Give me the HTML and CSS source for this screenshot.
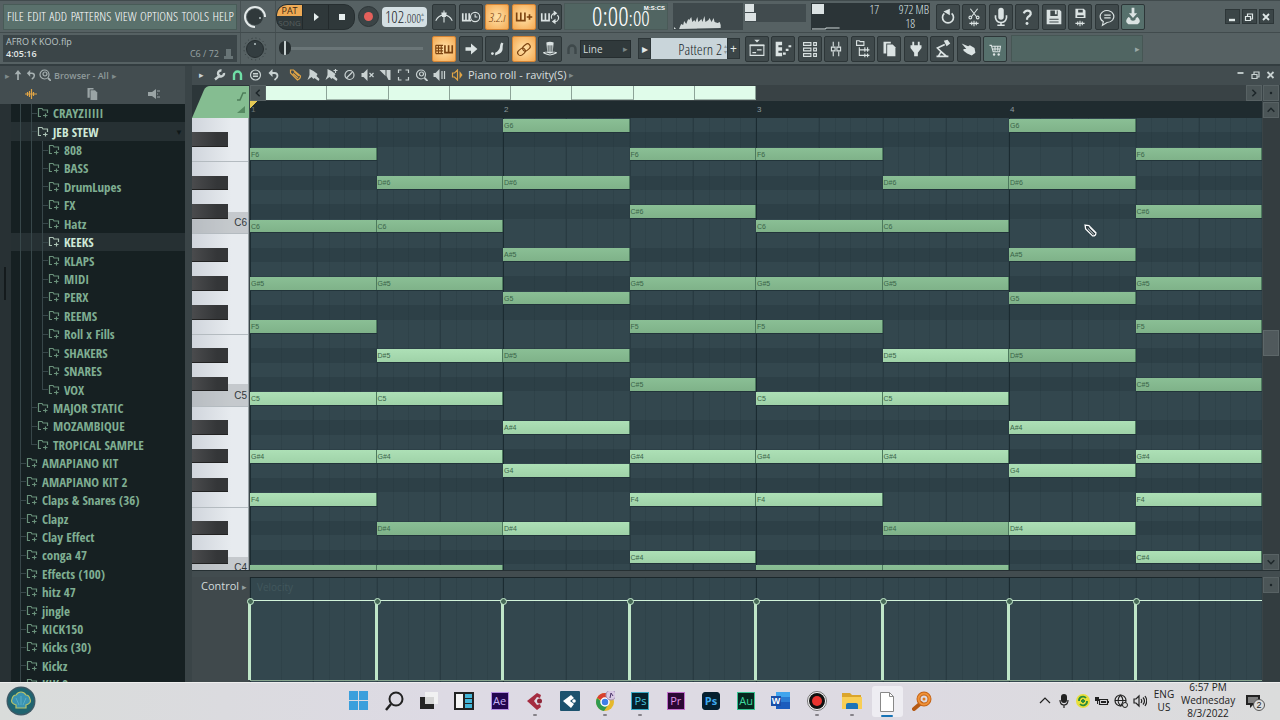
FILE: index.html
```html
<!DOCTYPE html>
<html lang="en">
<head>
<meta charset="utf-8">
<title>Piano roll - ravity(S)</title>
<link rel="stylesheet" href="styles.css">
</head>
<body>
<svg class="defs" aria-hidden="true">
  <symbol id="metro" viewBox="0 0 24 24"><path class="s" d="M3 16q3-6 9-6t9 6M12 5v13"/><path class="f" d="M9 7h6l-1 5h-4z"/></symbol>
  <symbol id="wait" viewBox="0 0 24 24"><path class="s w" d="M3 8v8h9M6.500 8v8M10 8v8"/><circle class="s" cx="16.500" cy="12" r="5"/><path class="s" d="M16.500 9v3h2.500"/></symbol>
  <symbol id="plus" viewBox="0 0 24 24"><path class="s w" d="M4 7v9h9V7M8.500 7v9M15 12h6M18 9v6"/></symbol>
  <symbol id="loop" viewBox="0 0 24 24"><path class="s w" d="M3 8v8h8V8M7 8v8"/><path class="s" d="M14 14a4 4 0 0 1 3-6M20 10a4 4 0 0 1-3 7"/><path class="f" d="M16 5l4 3-4 3zM18 14l-4 3 4 3z"/></symbol>
  <symbol id="typing" viewBox="0 0 24 24"><path class="s" d="M3 8h8M3 11h8M3 14h8M3 17h8M3 8v9M6 8v9M9 8v9"/><path class="s w" d="M13 8v8h8V8M17 8v8"/></symbol>
  <symbol id="arrow" viewBox="0 0 24 24"><path class="f" d="M6 10h6V6l7 6-7 6v-4H6z"/></symbol>
  <symbol id="slide" viewBox="0 0 24 24"><path class="f" d="M12 15c5-4 2-7 5-10l2 1c-2 4 1 8-4 11l-5 2v-3z"/><circle class="f" cx="7" cy="17" r="1.500"/></symbol>
  <symbol id="link" viewBox="0 0 24 24"><g class="s"><rect x="4" y="12" width="9" height="6" rx="3" transform="rotate(-40 9 14)"/><rect x="10" y="7" width="9" height="6" rx="3" transform="rotate(-40 15 10)"/></g></symbol>
  <symbol id="hat" viewBox="0 0 24 24"><path class="f" d="M8 5q4-2 8 0l-1 10h2q4 0 2 2-7 4-14 0-2-2 2-2h2z"/><path class="k" d="M10 8v7M12 8v7M14 8v7M7 16q5 3 10 0"/></symbol>
  <symbol id="playlist" viewBox="0 0 24 24"><path class="f" d="M9 2h6l-3 3z"/><path class="s w" d="M4 8h16"/><path class="s" d="M4.500 8h15v11h-15zM7 16h4M12 13h5"/></symbol>
  <symbol id="piano" viewBox="0 0 24 24"><path class="f" d="M4 4h7v4H7v2h4v4H7v2h4v4H4z"/><path class="s x" d="M12 17h3M15 13h3M18 9h3"/></symbol>
  <symbol id="rack" viewBox="0 0 24 24"><path class="s" d="M5 5h8v3H5zM5 11h8v3H5zM5 17h8v3H5zM16 5h3v3h-3zM16 11h3v3h-3zM16 17h3v3h-3z"/></symbol>
  <symbol id="mixer" viewBox="0 0 24 24"><path class="s" d="M9 4v5M9 15v5M15 4v5M15 15v5M7 10h4v4H7zM13 10h4v4h-4z"/></symbol>
  <symbol id="tree" viewBox="0 0 24 24"><path class="s" d="M5 3h3l1 1h4v4H5zM8 10v9h4M8 13h4M14 10v5M17 10v5M12 13h7M14 17v4M17 17v4M12 19h7"/></symbol>
  <symbol id="pages" viewBox="0 0 24 24"><path class="f" d="M6 4h8v2H9v11H6z"/><path class="f" d="M10 7h6l3 3v10h-9z"/></symbol>
  <symbol id="plug" viewBox="0 0 24 24"><path class="f" d="M8 4h2v4h4V4h2v4h2v3l-4 5v4h-4v-4l-4-5V8h2z"/></symbol>
  <symbol id="lamp" viewBox="0 0 24 24"><path class="f" d="M14 3l4-1 3 4-4 3z"/><path class="s w" d="M15 7L7 11l4 4-3 5M11 15l6 5M6 20h13"/></symbol>
  <symbol id="hand" viewBox="0 0 24 24"><path class="f" d="M4 6l7 3 2-1 5 3 1 5-4 3-5-2-4-3 0-2 3 0z"/></symbol>
  <symbol id="cart" viewBox="0 0 24 24"><path class="s" d="M6 8h2l2 7h7l1-6H9M9 12h9M12 9v5M15 9v5"/><circle class="f" cx="11" cy="18" r="1.300"/><circle class="f" cx="16" cy="18" r="1.300"/></symbol>
  <symbol id="undo" viewBox="0 0 24 24"><path class="s w" d="M8 8a6 6 0 1 0 8 0"/><path class="f" d="M7 6l7-3v7z"/></symbol>
  <symbol id="cut" viewBox="0 0 24 24"><path class="s" d="M8 3l7 9M16 3l-7 9"/><circle class="s" cx="8" cy="12.500" r="1.500"/><circle class="s" cx="16" cy="12.500" r="1.500"/><path class="s" d="M7 19h10M9.500 17v4M12 16v6M14.500 17v4"/></symbol>
  <symbol id="mic" viewBox="0 0 24 24"><rect class="f" x="9" y="2" width="6" height="13" rx="3"/><path class="s w" d="M6 10v3q1 5 6 5t6-5v-3M12 18v3M8 21h8"/></symbol>
  <symbol id="help" viewBox="0 0 24 24"><path class="s x" d="M8.500 8q1-3 4-3 4 0 3.500 4-1 2-3 3-1 1-1 3"/><circle class="f" cx="12" cy="19" r="1.600"/></symbol>
  <symbol id="save" viewBox="0 0 24 24"><path class="f" fill-rule="evenodd" d="M4 4h14l2 2v14H4zM8 5v6h8V5h-1v4h-2V5zM7 14v1h10v-1zM7 17v1h10v-1z"/></symbol>
  <symbol id="savew" viewBox="0 0 24 24"><path class="f" fill-rule="evenodd" d="M7 3h9l2 2v8H7zM10 4v3h5V4zM9 10v2h7v-2z"/><path class="s" d="M7 19h10M9.500 17v4M12 16v6M14.500 17v4"/></symbol>
  <symbol id="chat" viewBox="0 0 24 24"><path class="s" d="M8 17a7.500 6.500 0 1 1 4 1l-5 3zM9 10h7M9 13h7"/></symbol>
  <symbol id="dl" viewBox="0 0 24 24"><path class="f" d="M10.500 2h3v6h3L12 13 7.500 8h3z"/><path class="f" d="M7 12l2 1q0 3 3 3t3-3l2-1q5 5 0 8H7q-5-3 0-8z"/></symbol>
  <symbol id="folder" viewBox="0 0 12 12"><path class="s" d="M4 9.500H1.500v-8H5l1 1.500h4.500V6M6 8.500h4.500M8.500 6.500v4"/></symbol>
  <symbol id="magnet" viewBox="0 0 12 12"><path class="s x" d="M2.500 11V6a3.500 3.500 0 0 1 7 0v5"/></symbol>
  <symbol id="wrench" viewBox="0 0 12 12"><path class="s x" d="M1.500 10.500L7 6M10.500 4A3 3 0 1 1 8 1.500"/></symbol>
  <symbol id="menu" viewBox="0 0 12 12"><circle class="s" cx="6" cy="6" r="5"/><path class="s" d="M3.500 4.500h5M3.500 6h5M3.500 7.500h5"/></symbol>
  <symbol id="back" viewBox="0 0 12 12"><path class="s w" d="M4 4h3q3 0 3 3 0 2-3 4"/><path class="f" d="M5 0v8L1 4z"/></symbol>
  <symbol id="pencil" viewBox="0 0 12 12"><path class="s" d="M1 1l3 0 7 6q0 3-3 4L1 4zM3.500 4.500l5 4.500M4.500 2.500l5 4.500"/></symbol>
  <symbol id="brush" viewBox="0 0 12 12"><path class="f" d="M2 0l4 2 4 3-1 2 3 3-1 2-4-3-1 1-2-2-4 3 2-5 0-2z"/></symbol>
  <symbol id="brush2" viewBox="0 0 12 12"><path class="f" d="M2 0l4 2 4 3-1 2 3 3-1 2-4-3-1 1-2-2-4 3 2-5 0-2zM8 1h4v1H8z"/><path class="s" d="M10 0v4"/></symbol>
  <symbol id="no" viewBox="0 0 12 12"><circle class="s" cx="6" cy="6" r="4.500"/><path class="s" d="M3 9l6-6"/></symbol>
  <symbol id="mute" viewBox="0 0 12 12"><path class="f" d="M0 4h2l4-4v12L2 8H0z"/><path class="s" d="M8 4l4 4M12 4L8 8"/></symbol>
  <symbol id="slice" viewBox="0 0 12 12"><path class="f" d="M0 1h6v6zM7 1h4v10H9L7 7z"/></symbol>
  <symbol id="select" viewBox="0 0 12 12"><path class="s" d="M1 4V1h3M8 1h3v3M11 8v3H8M4 11H1V8"/></symbol>
  <symbol id="zoomi" viewBox="0 0 12 12"><circle class="s" cx="5.500" cy="5.500" r="4.500"/><circle class="s" cx="6" cy="5" r="2"/><path class="s w" d="M9 9l3 3"/></symbol>
  <symbol id="sound" viewBox="0 0 12 12"><path class="f" d="M0 4h2l4-4v12L2 8H0z"/><path class="s" d="M8.500 2v8M11 2v8"/></symbol>
  <symbol id="speaker" viewBox="0 0 12 12"><path class="s" d="M1 4h2l3-3v10L3 8H1z"/><path class="f" d="M8 2l3 4-3 4z"/></symbol>
  <symbol id="wave" viewBox="0 0 12 12"><path class="s" d="M0 6h12M2.500 4v4M4.500 3v6M6.500 1v10M8.500 4v4"/></symbol>
  <symbol id="horn" viewBox="0 0 12 12"><path class="f" d="M0 4h4l4-3v10L4 8H0z"/><path class="s" d="M9 3h3M9 9h3M9 6h1"/></symbol>
  <symbol id="up" viewBox="0 0 12 12"><path class="f" d="M6 0l4 5H7v7H5V5H2z"/></symbol>
  <symbol id="chev" viewBox="0 0 12 12"><path class="s w" d="M2 8l4-4 4 4"/></symbol>
  <symbol id="dot" viewBox="0 0 12 12"><circle class="f" cx="6" cy="6" r="1.500"/></symbol>
</svg>

<header class="top">
  <div class="bar">
    <nav class="menus"><button>FILE</button><button>EDIT</button><button>ADD</button><button>PATTERNS</button><button>VIEW</button><button>OPTIONS</button><button>TOOLS</button><button>HELP</button></nav>
    <div class="knob-cell"><svg class="knob" viewBox="0 0 24 24"><circle cx="12" cy="12" r="8" fill="#30393b"/><path d="M12 22a10 10 0 1 1 10-10" fill="none" stroke="#e3e9e9" stroke-width="2"/><circle cx="17" cy="13" r="1" fill="#b9c5c6"/></svg></div>
    <div class="transport">
      <div class="pill">
        <div class="mode"><button class="pat">PAT</button><button class="song">SONG</button></div>
        <button aria-label="Play"><svg class="i12" viewBox="0 0 12 12"><path d="M4 2l5 4-5 4z" fill="#e6eeee"/></svg></button>
        <button aria-label="Stop"><svg class="i12" viewBox="0 0 12 12"><path d="M3 3h6v6H3z" fill="#e6eeee"/></svg></button>
      </div>
      <button class="rec" aria-label="Record"><span></span></button>
      <div class="tempo"><span>102</span><small>.000</small><i>▴<br>▾</i></div>
    </div>
    <div class="tools five">
      <button class="tool" aria-label="Metronome"><svg><use href="#metro"/></svg></button>
      <button class="tool" aria-label="Wait for input"><svg><use href="#wait"/></svg></button>
      <button class="tool on digits">3.2.ı</button>
      <button class="tool on" aria-label="Overdub"><svg><use href="#plus"/></svg></button>
      <button class="tool" aria-label="Loop record"><svg><use href="#loop"/></svg></button>
    </div>
    <div class="clock"><span>0:00</span><small>:00</small><sup>M:S:CS</sup></div>
    <div class="scope"><svg viewBox="0 0 69 27" preserveAspectRatio="none"><path d="M1 26v-2l2 2h3l2-5 2 1 1-4 2 3 2-5 1 1 2-3 1 5 2-2 1 2 2-5 1 5 3-3 1 3 2-6 1 6 3-2 1-2 2 4 2-4 1 4 3 1 2-1 1 3v3z" fill="#d3dada"/></svg></div>
    <div class="meter"><span class="m1"></span><span class="m2"></span></div>
    <div class="cpu"><span class="box"></span><b class="c17">17</b><b>972 MB</b><b class="c18">18</b><svg class="line" viewBox="0 0 68 5"><path d="M0 4h14V3h14" fill="none" stroke="#cfd8d8"/></svg></div>
    <div class="tools eight">
      <button class="tool" aria-label="Undo"><svg><use href="#undo"/></svg></button>
      <button class="tool" aria-label="Cut"><svg><use href="#cut"/></svg></button>
      <button class="tool" aria-label="Record audio"><svg><use href="#mic"/></svg></button>
      <button class="tool" aria-label="Help"><svg><use href="#help"/></svg></button>
      <button class="tool" aria-label="Save"><svg><use href="#save"/></svg></button>
      <button class="tool" aria-label="Render"><svg><use href="#savew"/></svg></button>
      <button class="tool" aria-label="Chat"><svg><use href="#chat"/></svg></button>
      <button class="tool teal" aria-label="Download"><svg><use href="#dl"/></svg></button>
    </div>
    <div class="win">
      <button aria-label="Minimize"><svg viewBox="0 0 12 12"><path class="s x" d="M3 9h6"/></svg></button>
      <button aria-label="Restore"><svg viewBox="0 0 12 12"><path class="s" d="M2.500 5.500h5v4h-5zM4.500 5V3h5v5H8"/></svg></button>
      <button aria-label="Close"><svg viewBox="0 0 12 12"><path class="s w" d="M3 3l6 6M9 3L3 9"/></svg></button>
    </div>
  </div>
  <div class="bar">
    <div class="hint"><span>AFRO K KOO.flp</span><div><b>4:05:16</b><span class="dim">C6 / 72 <svg class="i12" viewBox="0 0 12 12"><path d="M4 1h5v7h2v3H2V8h2z" fill="#687476"/></svg></span></div></div>
    <div class="knob-cell"><svg class="knob" viewBox="0 0 24 24"><circle cx="12" cy="12" r="11" fill="none" stroke="#333c3e" stroke-dasharray="1 3"/><circle cx="12" cy="12" r="8.500" fill="#333d40" stroke="#252d2f"/><circle cx="12" cy="7" r="1" fill="#bac6c6"/></svg></div>
    <div class="transport"><input class="pitch" type="range" min="0" max="100" value="0" aria-label="Song position"></div>
    <div class="tools five">
      <button class="tool on" aria-label="Typing keyboard"><svg><use href="#typing"/></svg></button>
      <button class="tool" aria-label="Step"><svg><use href="#arrow"/></svg></button>
      <button class="tool" aria-label="Slide"><svg><use href="#slide"/></svg></button>
      <button class="tool on" aria-label="Link"><svg><use href="#link"/></svg></button>
      <button class="tool" aria-label="Hat"><svg><use href="#hat"/></svg></button>
    </div>
    <svg class="i12 snap"><use href="#magnet"/></svg>
    <div class="line-wrap"><select class="line-select" aria-label="Snap"><option>Line</option></select><span>▸</span></div>
    <div class="pattern"><button aria-label="Pattern menu">▸</button><span>Pattern 2<i>▴<br>▾</i></span><button aria-label="Add pattern">+</button></div>
    <div class="tools ten">
      <button class="tool" aria-label="Playlist"><svg><use href="#playlist"/></svg></button>
      <button class="tool" aria-label="Piano roll"><svg><use href="#piano"/></svg></button>
      <button class="tool" aria-label="Channel rack"><svg><use href="#rack"/></svg></button>
      <button class="tool" aria-label="Mixer"><svg><use href="#mixer"/></svg></button>
      <button class="tool" aria-label="Browser"><svg><use href="#tree"/></svg></button>
      <button class="tool" aria-label="Project"><svg><use href="#pages"/></svg></button>
      <button class="tool" aria-label="Plugins"><svg><use href="#plug"/></svg></button>
      <button class="tool" aria-label="Tempo tapper"><svg><use href="#lamp"/></svg></button>
      <button class="tool" aria-label="Touch"><svg><use href="#hand"/></svg></button>
      <button class="tool teal" aria-label="Shop"><svg><use href="#cart"/></svg></button>
    </div>
    <div class="news">▸</div>
  </div>
</header>

<main class="work">
  <aside class="browser">
    <div class="b-head">
      <div class="b-title"><span>▸</span><svg class="i10"><use href="#up"/></svg><svg class="i10"><use href="#back"/></svg><svg class="i12"><use href="#zoomi"/></svg><b>Browser - All</b><span>▸</span></div>
      <div class="b-tabs"><svg class="i12 gold"><use href="#wave"/></svg><svg class="i16"><use href="#pages"/></svg><svg class="i12"><use href="#horn"/></svg></div>
    </div>
    <div class="b-body">
      <div class="b-strip"><span></span></div>
      <div class="b-list"><ul class="files" id="files"></ul></div>
    </div>
  </aside>
  <section class="roll">
    <div class="r-tools">
      <span class="tri">▸</span>
      <svg class="i12"><use href="#wrench"/></svg>
      <svg class="i12 mint"><use href="#magnet"/></svg>
      <svg class="i12"><use href="#menu"/></svg>
      <svg class="i12"><use href="#back"/></svg>
      <svg class="i12 gold draw"><use href="#pencil"/></svg>
      <svg class="i12"><use href="#brush"/></svg>
      <svg class="i12"><use href="#brush2"/></svg>
      <svg class="i12"><use href="#no"/></svg>
      <svg class="i12"><use href="#mute"/></svg>
      <svg class="i12"><use href="#slice"/></svg>
      <svg class="i12"><use href="#select"/></svg>
      <svg class="i12"><use href="#zoomi"/></svg>
      <svg class="i12"><use href="#sound"/></svg>
      <svg class="i12 gold title-icon"><use href="#speaker"/></svg>
      <h1>Piano roll - ravity(S)</h1><span class="tri dim">▸</span>
      <div class="r-win"><svg class="i12" viewBox="0 0 12 12"><path class="s w" d="M3 4h6"/></svg><svg class="i12" viewBox="0 0 12 12"><path class="s" d="M2.500 5.500h5v4h-5zM4.500 5V3h5v5H8"/></svg><svg class="i12" viewBox="0 0 12 12"><path class="s w" d="M3 3l6 6M9 3L3 9"/></svg></div>
    </div>
    <div class="r-grid">
      <div class="corner"><svg viewBox="0 0 57 32" preserveAspectRatio="none"><path d="M0 32L12 4q2-4 6-4h39v32z" fill="#85bd91"/><path d="M45 14h3l3-7h3" fill="none" stroke="#4d7d59" stroke-width="1.500"/><path d="M45 27l8-7v7z" fill="#568a62"/></svg></div>
      <div class="head">
        <div class="mini"><button aria-label="Scroll left"><svg class="left"><use href="#chev"/></svg></button><div class="track"><div class="clip"><i></i><i></i><i></i><i></i><i></i><i></i><i></i><i></i></div></div><button aria-label="Scroll right"><svg class="right"><use href="#chev"/></svg></button></div>
        <div class="ruler"><span class="one">1</span><span>2</span><span>3</span><span>4</span></div>
      </div>
      <div class="side"><button aria-label="Options"><svg><use href="#dot"/></svg></button><button aria-label="Scroll up"><svg><use href="#chev"/></svg></button></div>
      <div class="keys" id="keys"></div>
      <div class="lanes" id="lanes"><div class="cols" id="cols"></div>
        <svg class="cursor" viewBox="0 0 12 12"><path d="M1 1l3.500.5L11 8q0 3-3 3L1.500 4.500z" fill="#24343a" stroke="#fff" stroke-width="1.200"/><path d="M3.500 4L9 9.500M5 3l5 5" stroke="#fff" stroke-width=".8"/></svg>
      </div>
      <div class="scroll"><span class="thumb"></span><button aria-label="Scroll down"><svg class="down"><use href="#chev"/></svg></button></div>
      <div class="split"></div>
      <div class="control">Control <span>▸</span></div>
      <div class="velocity"><div class="cols" id="vcols"></div><span class="vname">Velocity</span><div class="vel" id="vel"></div></div>
      <div class="side low"><button aria-label="Control options"><svg><use href="#dot"/></svg></button></div>
    </div>
  </section>
</main>

<footer class="task">
  <svg class="shell" viewBox="0 0 30 30"><circle cx="15" cy="15" r="14.500" fill="#3d5a66"/><circle cx="15" cy="15" r="13" fill="#1f6470"/><path d="M10 22v-3q-6-2-4-6 1-4 4-4 2-3 5-3t5 3q3 0 4 4 2 4-4 6v3z" fill="#3a93b2" stroke="#b9c468" stroke-width="1.200"/><path d="M15 19V10M13 19l-3-7M17 19l3-7" stroke="#5aaec6"/></svg>
  <div class="apps">
    <span><svg viewBox="0 0 20 20"><path d="M0 0h9v9H0zM10 0h9v9h-9zM0 10h9v9H0zM10 10h9v9h-9z" fill="#3b9fdc"/></svg></span>
    <span><svg viewBox="0 0 20 20"><circle cx="12" cy="8" r="6.500" fill="none" stroke="#222" stroke-width="2"/><path d="M7 13l-5 6" stroke="#222" stroke-width="2.500"/></svg></span>
    <span><svg viewBox="0 0 20 20"><path d="M1 6h14v12H1z" fill="#252525"/><path d="M6 1h13v12H6z" fill="#f4f4f5" opacity=".85"/></svg></span>
    <span><svg viewBox="0 0 20 20"><path d="M0 1h20v18H0z" fill="#222"/><path d="M2 3h7v14H2z" fill="#f5f5f5"/><path d="M11 3h7v4h-7zM11 8h7v4h-7zM11 13h7v4h-7z" fill="#43b5d8"/></svg></span>
    <span><b class="ad ae">Ae</b></span>
    <span class="run"><svg viewBox="0 0 20 20"><path fill-rule="evenodd" d="M2 10l10-8 4 2-1 3-3-1-3 4 3 4 3-1 1 3-4 3z" fill="#a52c40"/><circle cx="14.500" cy="10" r="2.500" fill="#8f2638"/></svg></span>
    <span><svg viewBox="0 0 20 20"><rect width="20" height="20" rx="1" fill="#1d526e"/><path d="M3 10l8-6 3 3-4 3 4 3-3 4z" fill="#fff"/><circle cx="14" cy="10" r="1.800" fill="#fff"/></svg></span>
    <span class="run"><svg viewBox="0 0 20 20"><circle cx="10" cy="11" r="9" fill="#e5b82c"/><path d="M2 7a9 9 0 0 1 16 0l-8 4z" fill="#d8402f"/><path d="M2 7a9 9 0 0 0 7 13l4-6-5-2z" fill="#2f9a50"/><circle cx="10" cy="11" r="4" fill="#3f7fe8" stroke="#fff" stroke-width="1.500"/><circle cx="16" cy="4" r="5" fill="#d9c9e4" stroke="#a493b8"/><path d="M15 7l1-5 2 3" stroke="#4a3568" fill="none"/></svg></span>
    <span class="run"><b class="ad ps">Ps</b></span>
    <span><b class="ad pr">Pr</b></span>
    <span><b class="ad ps2">Ps</b></span>
    <span><b class="ad au">Au</b></span>
    <span><svg viewBox="0 0 20 20"><path d="M5 1h14v5H5z" fill="#41a5ee"/><path d="M5 6h14v5H5z" fill="#2b7cd3"/><path d="M5 11h14v7H5z" fill="#1b5cbd"/><path d="M0 5h10v10H0z" fill="#1a4fa8"/><text x="5" y="13" class="wd">W</text></svg></span>
    <span class="run"><svg viewBox="0 0 20 20"><circle cx="10" cy="10" r="9.500" fill="#f7f7f7" stroke="#555" stroke-width=".8"/><circle cx="10" cy="10" r="8" fill="#111"/><circle cx="10" cy="10" r="5" fill="#e9332f"/></svg></span>
    <span class="run"><svg viewBox="0 0 20 20"><path d="M0 2h8l2 2h9v4H0z" fill="#dba52c"/><path d="M0 6h20v12H0z" fill="#f8ce55"/><path d="M4 18v-4q0-2 2-2h8q2 0 2 2v4z" fill="#1c74b8"/></svg></span>
    <span class="run active"><svg viewBox="0 0 20 20"><path d="M3.500.5h9l4 4v15h-13z" fill="#fff" stroke="#888"/><path d="M12.500.5v4h4" fill="none" stroke="#888"/></svg></span>
    <span><svg viewBox="0 0 20 20"><path d="M9 12l-7 6" stroke="#b65a14" stroke-width="4" stroke-linecap="round"/><circle cx="12" cy="8" r="5.500" fill="none" stroke="#c56418" stroke-width="4"/><circle cx="12" cy="8" r="5.500" fill="none" stroke="#f09238" stroke-width="2"/><circle cx="12" cy="8" r="1.500" fill="#e07a20"/></svg></span>
  </div>
  <div class="tray">
    <svg viewBox="0 0 14 14"><path class="s" d="M2 9l5-5 5 5"/></svg>
    <svg viewBox="0 0 14 14"><rect class="f" x="4" y="0" width="6" height="9" rx="3"/><path class="s" d="M3 6q0 5 4 5t4-5M7 11v3"/></svg>
    <svg viewBox="0 0 14 14"><circle cx="7" cy="7" r="7" fill="#e9df3a"/><path d="M3 7a4 4 0 0 1 7-3M11 7a4 4 0 0 1-7 3M7 5v4M5 7h4" fill="none" stroke="#2c8c3a" stroke-width="1.800"/></svg>
    <svg viewBox="0 0 14 14"><path class="s" d="M4.500 5.500h8v5h-8z"/><path class="f" d="M6 7h5v2H6zM0 3h4v4H0zM2 7h1v3H2zM13 7h1v2h-1z"/></svg>
    <svg viewBox="0 0 14 14"><circle class="s" cx="6.500" cy="6.500" r="5.500"/><path class="s" d="M1 6.500h11M6.500 1q-5 5.500 0 11M6.500 1q5 5.500 0 11"/><circle cx="11" cy="11" r="2.500" fill="#ddd" stroke="#222"/></svg>
    <svg viewBox="0 0 14 14"><path class="s" d="M1 5h2l3-3v10L3 9H1zM8 5q1.500 2 0 4M10 3.500q3 3.500 0 7M12 2q3.500 5 0 10"/></svg>
    <div class="lang">ENG<br>US</div>
    <time>6:57 PM<br>Wednesday<br>8/3/2022</time>
    <div class="note-c"><svg viewBox="0 0 14 14"><path class="f" d="M0 1h14v10H7l-3 3v-3H0z"/><path d="M2 4h10M2 6h10M2 8h7" stroke="#ddd"/></svg><em>2</em></div>
  </div>
</footer>
<script src="script.js"></script>
</body>
</html>
```
FILE: styles.css
```css
:root { --narrow: "Open Sans Condensed Light", "OpenSans Condensed Light", "Roboto Condensed", "Open Sans Condensed", "Open Sans", sans-serif; }
* { box-sizing: border-box; }
body {
  margin: 0; height: 100vh; display: flex; flex-direction: column; overflow: hidden;
  background: #3c4649; color: #dfe7e7; font-size: 12px;
  font-family: "Open Sans", "Noto Sans", sans-serif;
}
button { margin: 0; padding: 0; border: 0; background: none; color: inherit; font: inherit; }
.defs { position: absolute; width: 0; height: 0; }
svg { display: block; color: inherit; flex: none; }
.s { fill: none; stroke: currentColor; stroke-width: 1.2; }
.w { stroke-width: 1.8; }
.x { stroke-width: 2.4; }
.f { fill: currentColor; }
.k { fill: none; stroke: #3f494b; }
.i10 { width: 10px; height: 10px; }
.i12 { width: 12px; height: 12px; }
.i16 { width: 18px; height: 18px; }
.gold { color: #e0a445; }
.mint { color: #6fe0a6; }

/* Main toolbar */
.top { background: #566163; border-bottom: 2px solid #333d40; }
.bar { display: flex; align-items: center; height: 32px; padding-left: 3px; border-top: 1px solid #414b4d; }
.menus {
  width: 234px; height: 26px; display: flex; align-items: center; justify-content: space-between; padding: 0 2px 2px 3px;
  background: #5a716c; border: 1px solid #485b57; color: #fff; font: 13px var(--narrow);
}
.knob-cell { width: 36px; height: 31px; margin-left: 3px; display: flex; align-items: center; justify-content: center; border: solid #465052; border-width: 0 1px; padding-right: 6px; }
.knob { width: 24px; height: 24px; }
.transport { width: 156px; height: 28px; display: flex; align-items: center; gap: 3px; }
.pill { width: 79px; height: 26px; display: flex; background: #2f383a; border: 1px solid #262e30; border-radius: 11px; overflow: hidden; }
.pill > * { flex: 1; display: grid; place-items: center; border-right: 1px solid #232a2c; }
.pill > :last-child { border: 0; }
.mode { font: 9px/11px "Open Sans", sans-serif; }
.mode button { width: 100%; }
.pat { background: #eeaa55; color: #3c2711; border-radius: 8px 0 0 0; }
.song { color: #59605f; font-size: 8px; }
.rec { width: 21px; height: 21px; border-radius: 50%; background: #3b4446; border: 1px solid #2c3537; display: grid; place-items: center; }
.rec span { width: 9px; height: 9px; border-radius: 50%; background: #e4605b; }
.tempo { width: 45px; height: 20px; display: flex; align-items: baseline; justify-content: center; background: #d5e0e4; color: #1c282c; border-radius: 4px; font: 16px/20px var(--narrow); }
.tempo small { font-size: 12px; }
.tempo i, .pattern i { font: 6px/6px "DejaVu Sans", sans-serif; color: #8e9a9e; }
.tempo i { align-self: center; }
.tools { display: flex; justify-content: space-between; }
.five { width: 130px; }
.eight { width: 209px; margin-left: 6px; }
.ten { width: 262px; margin-left: 5px; }
.tool { width: 24px; height: 26px; display: grid; place-items: center; background: #3f494b; border: 1px solid #2d3638; border-radius: 2px; color: #dbe3e3; }
.tool svg { width: 22px; height: 22px; }
.tool.on { background: radial-gradient(#ffe3ab, #f5a951); color: #7c4310; border-color: #d48434; }
.tool.teal { background: #56706c; }
.tool.digits { font: italic 13px var(--narrow); }
.clock { width: 104px; height: 27px; margin-left: 2px; display: flex; align-items: baseline; padding-left: 27px; background: #516562; border: 1px solid #4a5a58; color: #fff; font: 26px/25px var(--narrow); position: relative; }
.clock small { font-size: 21px; }
.clock sup { position: absolute; right: 2px; top: 1px; font: bold 6px/7px "Liberation Sans", sans-serif; }
.scope { width: 70px; height: 27px; margin-left: 5px; background: #3f494c; }
.scope svg { width: 100%; height: 100%; }
.meter { width: 61px; height: 18px; margin-left: 2px; align-self: flex-start; margin-top: 3px; background: #414b4e; display: flex; flex-direction: column; gap: 1px; }
.meter span { height: 8px; width: 9px; background: #dbe2e3; }
.meter .m2 { width: 11px; }
.cpu { width: 119px; height: 27px; margin-left: 5px; background: #2b3437; display: grid; grid-template-columns: 12px 55px 1fr; font: 12px/13px var(--narrow); padding: 0 1px; text-align: right; }
.cpu b { font-weight: normal; }
.cpu .box { background: #dbe2e3; height: 10px; margin-top: 1px; }
.cpu .c18 { grid-column: 3; grid-row: 2; padding-right: 14px; }
.cpu .line { grid-column: 1 / 3; grid-row: 2; width: 67px; height: 5px; align-self: end; }
.win { margin-left: auto; display: flex; gap: 2px; padding-right: 6px; }
.win button { width: 15px; height: 15px; background: #3b4547; border: 1px solid #2d3638; }
.win svg { width: 12px; height: 12px; }
.hint { width: 234px; height: 27px; padding: 1px 3px 0; background: #3b4548; color: #bcc5c6; font-size: 9px; line-height: 12px; }
.hint div { display: flex; justify-content: space-between; }
.hint b { color: #e3e9e9; font-weight: 600; }
.hint .dim { display: flex; gap: 3px; color: #98a3a4; }
.pitch { width: 144px; height: 16px; margin: 0 0 0 3px; appearance: none; background: none; }
.pitch::-webkit-slider-runnable-track { height: 3px; background: #6b7678; }
.pitch::-webkit-slider-thumb { appearance: none; width: 12px; height: 14px; margin-top: -6px; border-radius: 6px; background: linear-gradient(90deg, #272f31 40%, #c7d0d0 40% 55%, #272f31 55%); }
.snap { color: #3e484a; margin-left: 4px; }
.line-wrap { margin-left: 2px; position: relative; }
.line-wrap span { position: absolute; right: 3px; top: 3px; font-size: 9px; line-height: 12px; color: #7b8687; pointer-events: none; }
.line-select { display: block; width: 51px; height: 18px; padding: 0 2px; appearance: none; background: #30393b; color: #d5dcdc; border: 1px solid #252d2f; font: 10px "Open Sans", sans-serif; }
.pattern { display: flex; height: 21px; margin-left: 7px; }
.pattern button { width: 13px; background: #3b4547; border: 1px solid #2d3638; color: #e3eaea; line-height: 18px; }
.pattern > span { width: 76px; display: flex; align-items: center; justify-content: flex-end; gap: 2px; background: #c9d5da; color: #1b272b; font: 15px var(--narrow); }
.news { width: 132px; height: 27px; margin-left: 4px; padding-right: 2px; background: #506562; border: 1px solid #465654; color: #9aa8a6; text-align: right; line-height: 25px; font-size: 9px; }

/* Work area */
.work { flex: 1; min-height: 0; display: flex; gap: 7px; background: #3a4447; }
.browser { width: 185px; display: flex; flex-direction: column; }
.b-head { height: 38px; background: #434d50; color: #a6b0b1; }
.b-title { display: flex; align-items: center; gap: 3px; height: 18px; padding-left: 5px; font-size: 9px; }
.b-title span { color: #7f8a8b; }
.b-title b { font-weight: 600; color: #8f9a9b; }
.b-tabs { display: grid; grid-template-columns: 1fr 1fr 1fr; justify-items: center; align-items: center; height: 19px; color: #9aa4a5; }
.b-body { flex: 1; min-height: 0; display: flex; }
.b-strip { width: 11px; background: #283134; display: flex; align-items: flex-start; }
.b-strip span { width: 2px; height: 33px; margin: 163px 0 0 4px; background: #141a1c; }
.b-list { flex: 1; overflow: hidden; background: #162022; }
.files { list-style: none; margin: 0; padding: 0; height: 102%; display: grid; grid-auto-rows: 1fr; color: #7fae92; font: 13px/18px "Open Sans Condensed", "Open Sans", sans-serif; }
.files li { display: flex; align-items: center; padding-left: 9px; min-height: 0; position: relative; }
.files li.sel { background: #263033; color: #cfe9d8; }
.files svg { width: 12px; height: 12px; margin: 0 4px 0 -1px; opacity: .8; }
.g { width: 11px; height: 100%; border-left: 1px solid #38474a; }
.g.tick { width: 7px; background: linear-gradient(#38474a, #38474a) 0 50% / 5px 1px no-repeat; }
.g.end { border-image: linear-gradient(#38474a 50%, transparent 50%) 1; }
.more { margin-left: auto; padding-right: 2px; font-size: 8px; color: #101819; }

/* Piano roll */
.roll { flex: 1; min-width: 0; display: flex; flex-direction: column; }
.r-tools { height: 19px; display: flex; align-items: center; gap: 6px; padding: 0 0 2px 7px; color: #c9d2d2; background: #424c4f; }
.tri { font-size: 9px; width: 8px; }
.tri.dim { color: #7f8a8b; }
.r-tools .i12 { width: 13px; height: 12px; margin-right: -1px; }
.r-tools .draw { margin-left: 4px; }
.r-tools .title-icon { margin-left: -7px; }
.r-tools .draw + svg, .r-tools .draw { flex: none; }
.r-tools .title-icon { margin-left: 0; }
.r-tools h1 { margin: 0 -3px 0 -1px; font: 11px "Open Sans", sans-serif; color: #d7dede; white-space: nowrap; }
.r-win { margin-left: auto; display: flex; gap: 3px; padding-right: 4px; }
.r-grid { flex: 1; min-height: 0; display: grid; grid-template-columns: 57px 1fr 17px; grid-template-rows: 33px 1fr 7px 105px; column-gap: 1px; }
.corner svg { width: 100%; height: 32px; margin-top: 1px; }
.corner { background: #2c3639; }
.head { display: flex; flex-direction: column; }
.mini { height: 16px; display: flex; background: #394245; }
.mini button, .side button, .scroll button { width: 16px; height: 16px; display: grid; place-items: center; background: #4b5557; border: 1px solid #586264; color: #1d2629; }
.mini button svg, .side button svg, .scroll button svg { width: 10px; height: 10px; }
.left { transform: rotate(-90deg); }
.right { transform: rotate(90deg); }
.down { transform: rotate(180deg); }
.track { flex: 1; padding: 1px 0; }
.clip { width: 50%; height: 14px; display: grid; grid-template-columns: repeat(8, 1fr); background: #e0fcea; }
.clip i { border-right: 1px solid #8ca397; }
.clip i:nth-child(even) { border-bottom: 1px solid #a2b8ac; }
.ruler { flex: 1; display: grid; grid-template-columns: repeat(4, 1fr); background: #1f2b2f; color: #8d9a9d; font: 8px/17px "Liberation Sans", sans-serif; border-bottom: 1px solid #172124; }
.ruler span { padding-left: 1px; }
.ruler .one { background: linear-gradient(135deg, #e4c955 5px, transparent 5px) no-repeat; color: #6c7577; }
.side { display: flex; flex-direction: column; gap: 1px; background: #333d40; }
.keys { position: relative; overflow: hidden; background: linear-gradient(90deg, #d0d5dc, #e7ebef 70%); border-right: 1px solid #99a2a6; }
.key-black { position: absolute; left: 0; width: 64%; background: linear-gradient(90deg, #4a4b4d, #343638 70%); border-bottom: 1px solid #222; }
.key-c { position: absolute; left: 0; right: 0; background: rgba(150,155,158,.42); display: flex; align-items: center; justify-content: flex-end; padding-right: 1px; color: #30373a; font: 10px "Liberation Sans", sans-serif; }
.key-line { position: absolute; left: 0; right: 0; height: 1px; background: #b4bbc0; }
.lanes { position: relative; overflow: hidden; background: #33474e; }
.lane { position: absolute; left: 0; right: 0; background: #2d4047; }
.cols { position: absolute; inset: 0; display: grid; grid-template-columns: repeat(16, 1fr); }
.cols i { border-left: 1px solid #293b42; background: repeating-linear-gradient(90deg, transparent 0 calc(25% - 1px), rgba(25,42,48,.16) calc(25% - 1px) 25%); }
.cols i:nth-child(4n+1) { border-left-color: #1b2b31; }
.note { position: absolute; padding-left: 1px; background: linear-gradient(#8abf95, #7fb289); border: solid #4d7a5e; border-width: 0 1px 0 0; color: #3a6448; font: 7px/13px "Liberation Sans", sans-serif; box-shadow: 0 1px 0 #22343a; }
.note.hi { background: linear-gradient(#ade0b6, #9fd2a8); }
.cursor { position: absolute; left: 82.400%; top: 23.400%; width: 13px; height: 13px; }
.scroll { position: relative; background: #343d40; display: flex; flex-direction: column; justify-content: flex-end; }
.thumb { position: absolute; top: 47%; left: 0; width: 16px; height: 26px; background: #50595c; border: 1px solid #5d6769; }
.split { grid-column: 1 / 4; background: #424c4f; border-top: 1px solid #263033; }
.control { padding: 1px 3px 0 9px; background: #40494c; color: #d3dbdb; line-height: 16px; font-size: 11px; white-space: nowrap; }
.control span { font-size: 9px; color: #929d9e; }
.velocity { position: relative; background: #33474e; border-top: 1px solid #1b272b; }
.vname { position: absolute; left: 7px; top: 1px; font-size: 10px; line-height: 16px; color: #42575d; }
.vel { position: absolute; inset: 22px 0 1px; display: grid; grid-template-columns: repeat(8, 1fr); border-top: 1px solid #d2f3da; border-bottom: 1px solid #86a48e; }
.vel i { border-left: 3px solid #bfe6c8; position: relative; margin-left: -2px; }
.vel i::before { content: ""; position: absolute; left: -4px; top: -3px; width: 5px; height: 5px; border: 1px solid #c9efd2; border-radius: 50%; background: #466957; }

/* Taskbar */
.task { height: 38px; display: grid; grid-template-columns: 1fr 600px 1fr; align-items: start; background: linear-gradient(90deg, #d9dcda, #dddae4 35%, #dddae2 70%, #dbdcdc); color: #222; border-top: 1px solid #eee; }
.shell { width: 30px; height: 30px; margin: 3px 0 0 6px; }
.apps { display: grid; grid-template-columns: repeat(17, 1fr); height: 35px; padding-left: 1px; }
.apps span { display: grid; place-items: center; position: relative; }
.apps svg { width: 20px; height: 20px; }
.run::after { content: ""; position: absolute; bottom: 2px; left: 50%; margin-left: -2px; width: 4px; height: 2px; border-radius: 1px; background: #858289; }
.apps .active { background: #eeedf2; border-radius: 3px; margin: 3px 2px 1px; }
.active::after { bottom: 0; width: 12px; margin-left: -6px; background: #1673b6; }
.ad { width: 18px; height: 18px; display: grid; place-items: center; font: 11px/14px "Open Sans", sans-serif; border: 1px solid; }
.ae { background: #23064f; color: #c6b0f4; border-color: #b48fe0; }
.ps { background: #05202b; color: #49c6e0; border-color: #38a8c4; }
.pr { background: #2c0735; color: #dc90e4; border-color: #c06fcb; }
.ps2 { background: #05202f; color: #3da9ee; border-color: #05202f; border-radius: 3px; font-weight: bold; }
.au { background: #06281f; color: #3fd9a0; border-color: #39c392; }
.wd { font: bold 9px "Liberation Sans", sans-serif; fill: #fff; text-anchor: middle; }
.tray { display: flex; align-items: center; justify-content: flex-end; gap: 5px; height: 35px; padding-right: 14px; }
.tray svg { width: 14px; height: 14px; }
.lang, .tray time { font-size: 10px; line-height: 13px; text-align: center; }
.lang { width: 24px; }
.tray time { width: 54px; }
.note-c { position: relative; margin-left: 6px; width: 20px; }
.note-c em { position: absolute; left: 7px; top: 5px; width: 12px; height: 12px; border: 1px solid #555; border-radius: 50%; background: #ddd; font: 9px/10px "Liberation Sans", sans-serif; text-align: center; }
```
FILE: script.js
```js
// Browser tree: [name, depth, flags]; "s" highlighted, "m" has a menu arrow, "e" last of its branch
const files = [
  ["CRAYZIIIII", 2], ["JEB STEW", 2, "sm"], ["808", 3], ["BASS", 3], ["DrumLupes", 3], ["FX", 3],
  ["Hatz", 3], ["KEEKS", 3, "s"], ["KLAPS", 3], ["MIDI", 3], ["PERX", 3], ["REEMS", 3],
  ["Roll x Fills", 3], ["SHAKERS", 3], ["SNARES", 3], ["VOX", 3, "e"], ["MAJOR STATIC", 2],
  ["MOZAMBIQUE", 2], ["TROPICAL SAMPLE", 2, "e"], ["AMAPIANO KIT", 1], ["AMAPIANO KIT 2", 1],
  ["Claps & Snares (36)", 1], ["Clapz", 1], ["Clay Effect", 1], ["conga 47", 1],
  ["Effects (100)", 1], ["hitz 47", 1], ["jingle", 1], ["KICK150", 1], ["Kicks (30)", 1],
  ["Kickz", 1], ["KIK 2", 1]
];
const list = document.getElementById("files");
for (const [name, depth, flags = ""] of files) {
  const li = document.createElement("li");
  if (flags.includes("s")) li.className = "sel";
  let html = "";
  for (let d = 1; d <= depth; d++) {
    html += `<span class="g${d === depth ? " tick" : ""}${d === depth && flags.includes("e") ? " end" : ""}"></span>`;
  }
  li.innerHTML = html + '<svg><use href="#folder"/></svg>';
  li.append(name);
  if (flags.includes("m")) li.insertAdjacentHTML("beforeend", '<span class="more">▼</span>');
  list.append(li);
}

// Piano roll: visible rows run from G6 down to C4
const names = ["C", "C#", "D", "D#", "E", "F", "F#", "G", "G#", "A", "A#", "B"];
const topPitch = 6 * 12 + 7;
const rowPct = 100 / 31.4;
const keys = document.getElementById("keys");
const lanes = document.getElementById("lanes");
function add(parent, cls, top, height, text = "") {
  const el = document.createElement("div");
  el.className = cls;
  el.style.top = top * rowPct + "%";
  if (height) el.style.height = height * rowPct + "%";
  el.textContent = text;
  parent.append(el);
  return el;
}
const cols = document.getElementById("cols");
for (let row = 0; row < 32; row++) {
  const pitch = topPitch - row;
  const name = names[pitch % 12];
  if (name === "C") add(keys, "key-c", row - 0.5, 1.5, "C" + Math.floor(pitch / 12));
  if (name === "C" || name === "F") add(keys, "key-line", row + 1, 0);
  if (name.includes("#")) lanes.insertBefore(add(lanes, "lane", row, 1), cols);
}
for (let row = 0; row < 32; row++) {
  if (names[(topPitch - row) % 12].includes("#")) add(keys, "key-black", row, 1);
}
cols.innerHTML = "<i></i>".repeat(16);
document.getElementById("vcols").innerHTML = "<i></i>".repeat(16);
document.getElementById("vel").innerHTML = "<i></i>".repeat(8);

// Chords per half bar; "*" marks a louder note
const chords = [
  "F6 C6 G#5 F5 C5* G#4* F4* C4",
  "D#6 C6 G#5 D#5* C5* G#4* D#4 C4",
  "G6 D#6 A#5 G5 D#5 A#4* G4* D#4*",
  "F6 C#6 G#5 F5 C#5 G#4* F4* C#4*"
];
for (let i = 0; i < 8; i++) {
  for (const item of chords[i % 4].split(" ")) {
    const label = item.replace("*", "");
    const pitch = Number(label.slice(-1)) * 12 + names.indexOf(label.slice(0, -1));
    const el = add(lanes, item.endsWith("*") ? "note hi" : "note", topPitch - pitch + 0.06, 0.88, pitch > 48 ? label : "");
    el.style.left = i * 12.5 + "%";
    el.style.width = "12.5%";
  }
}
```
